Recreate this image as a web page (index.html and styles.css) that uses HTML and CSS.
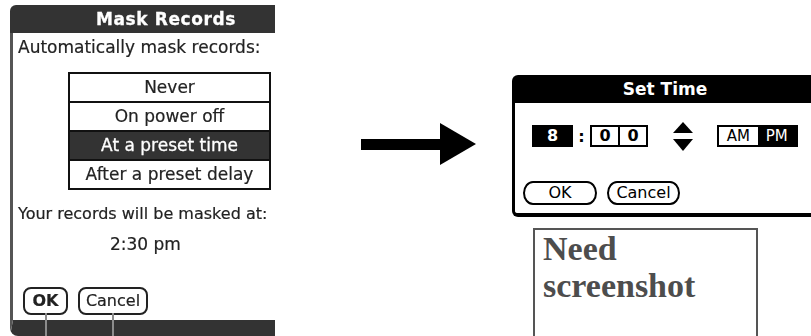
FILE: index.html
```html
<!DOCTYPE html>
<html lang="en">
<head>
<meta charset="utf-8">
<title>Mask Records / Set Time</title>
<link rel="stylesheet" href="styles.css">
</head>
<body>
<div class="page">
  <div class="mask-clip">
    <div class="mask-dialog">
      <div class="mask-title">Mask Records</div>
      <div class="mask-body">
        <div class="mask-line">Automatically mask records:</div>
        <div class="mask-list">
          <div class="mask-item">Never</div>
          <div class="mask-item">On power off</div>
          <div class="mask-item selected">At a preset time</div>
          <div class="mask-item">After a preset delay</div>
        </div>
        <div class="mask-line note">Your records will be masked at:</div>
        <div class="mask-line time">2:30 pm</div>
        <div class="mask-buttons">
          <div class="mask-btn ok">OK</div>
          <div class="mask-btn cancel">Cancel</div>
        </div>
      </div>
    </div>
  </div>

  <svg class="arrow" width="115" height="42" viewBox="0 0 115 42">
    <rect x="0" y="16" width="80" height="11" fill="#000"/>
    <polygon points="79,0 115,21 79,42" fill="#000"/>
  </svg>

  <div class="right-col">
    <div class="settime">
      <div class="st-title">Set Time</div>
      <div class="st-body">
        <div class="st-row">
          <div class="hour">8</div>
          <div class="colon">:</div>
          <div class="minutes"><span class="cell">0</span><span class="cell">0</span></div>
          <svg class="updown" width="20" height="29" viewBox="0 0 20 29">
            <polygon points="0,11 10,0 20,11" fill="#000"/>
            <polygon points="0,17 20,17 10,29" fill="#000"/>
          </svg>
          <div class="ampm"><span class="cell">AM</span><span class="cell on">PM</span></div>
        </div>
        <div class="st-buttons">
          <div class="st-btn ok">OK</div>
          <div class="st-btn cancel">Cancel</div>
        </div>
      </div>
    </div>
    <div class="need">Need screenshot</div>
  </div>
</div>
</body>
</html>
```

FILE: styles.css
```css
html, body {
  margin: 0;
  padding: 0;
  background: #fff;
  overflow: hidden;
}

.page {
  display: flex;
  align-items: flex-start;
  width: 811px;
  height: 336px;
  overflow: hidden;
  padding-left: 10px;
  box-sizing: border-box;
}

/* ---------- Mask Records (cropped Palm screen) ---------- */
.mask-clip {
  flex: none;
  width: 265px;
  height: 331px;
  margin-top: 5px;
  overflow: hidden;
  filter: blur(0.45px);
}

.mask-dialog {
  width: 312px;
  font-family: "DejaVu Sans", sans-serif;
  color: #222;
  -webkit-text-stroke: 0.2px #222;
}

.mask-title {
  height: 28px;
  background: #333;
  border-radius: 6px 6px 0 0;
  color: #fff;
  -webkit-text-stroke: 0.3px #fff;
  font-weight: bold;
  font-size: 17px;
  line-height: 29px;
  letter-spacing: 0.6px;
  text-align: center;
}

.mask-body {
  border-left: 3px solid #555;
  border-bottom: 16px solid #333;
  border-bottom-left-radius: 8px;
  padding: 4px 0 5px 5px;
}

.mask-line {
  font-size: 17px;
  line-height: 20px;
  white-space: nowrap;
}

.mask-list {
  margin: 15px 0 0 50px;
  width: 199px;
  border: 2px solid #111;
}

.mask-item {
  height: 27px;
  line-height: 27px;
  font-size: 17px;
  text-align: center;
  white-space: nowrap;
}

.mask-item + .mask-item {
  border-top: 2px solid #111;
}

.mask-item.selected {
  background: #333;
  color: #fff;
  -webkit-text-stroke: 0.3px #fff;
}

.mask-line.note {
  margin-top: 14px;
  font-size: 16px;
}

.mask-line.time {
  margin: 10px 0 0 92px;
}

.mask-buttons {
  display: flex;
  gap: 10px;
  margin: 33px 0 0 5px;
}

.mask-btn {
  position: relative;
  height: 28px;
  box-sizing: border-box;
  border: 2px solid #222;
  border-radius: 8px;
  font-size: 16px;
  line-height: 24px;
  text-align: center;
}

.mask-btn.ok { width: 45px; font-weight: bold; }
.mask-btn.cancel { width: 70px; }

/* callout leader lines below the buttons */
.mask-btn::after {
  content: "";
  position: absolute;
  left: 50%;
  top: 100%;
  width: 2px;
  height: 30px;
  margin-left: -1px;
  background: #8c8c8c;
}

/* ---------- Arrow ---------- */
.arrow {
  flex: none;
  margin: 123px 0 0 86px;
}

/* ---------- Right column ---------- */
.right-col {
  flex: none;
  width: 306px;
  margin-left: 36px;
}

.settime {
  margin-top: 75px;
  font-family: "DejaVu Sans", sans-serif;
  color: #000;
}

.st-title {
  height: 28px;
  background: #000;
  border-radius: 6px 6px 0 0;
  color: #fff;
  font-weight: bold;
  font-size: 17px;
  line-height: 28px;
  text-align: center;
}

.st-body {
  border-left: 3px solid #000;
  border-bottom: 4px solid #000;
  border-bottom-left-radius: 6px;
  padding: 22px 0 8px 0;
}

.st-row {
  display: flex;
  align-items: center;
  height: 22px;
  padding-left: 17px;
}

.hour {
  width: 41px;
  height: 22px;
  background: #000;
  color: #fff;
  font-weight: bold;
  font-size: 16px;
  line-height: 22px;
  text-align: center;
}

.colon {
  width: 17px;
  font-weight: bold;
  font-size: 16px;
  text-align: center;
}

.minutes, .ampm {
  display: flex;
  height: 22px;
  box-sizing: border-box;
  border: 2px solid #000;
}

.minutes { width: 58px; }

.minutes .cell {
  flex: 1;
  font-weight: bold;
  font-size: 16px;
  line-height: 18px;
  text-align: center;
}

.minutes .cell + .cell { border-left: 2px solid #000; }

.updown {
  margin-left: 25px;
}

.ampm {
  width: 81px;
  margin-left: 24px;
}

.ampm .cell {
  flex: 1;
  font-size: 15px;
  line-height: 18px;
  text-align: center;
}

.ampm .cell.on {
  background: #000;
  color: #fff;
}

.st-buttons {
  display: flex;
  gap: 10px;
  margin-top: 34px;
  padding-left: 8px;
}

.st-btn {
  height: 24px;
  box-sizing: border-box;
  border: 2px solid #000;
  border-radius: 10px / 12px;
  font-size: 16px;
  line-height: 20px;
  text-align: center;
}

.st-btn.ok { width: 74px; }
.st-btn.cancel { width: 73px; }

/* ---------- Placeholder box ---------- */
.need {
  width: 225px;
  height: 120px;
  box-sizing: border-box;
  margin: 11px 0 0 21px;
  border: 2px solid #555;
  padding: 0 8px;
  font-family: "Liberation Serif", serif;
  font-weight: bold;
  font-size: 34px;
  line-height: 37px;
  color: #4d4d4d;
}
```
